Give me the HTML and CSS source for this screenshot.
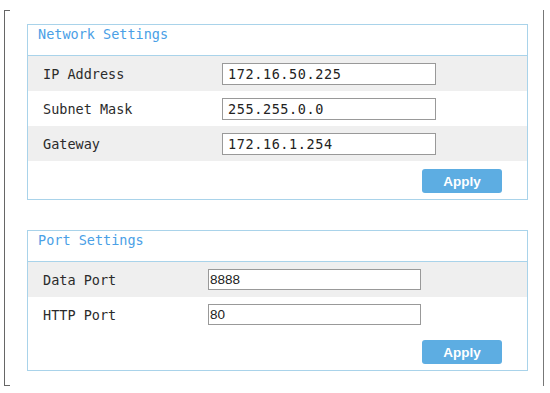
FILE: index.html
```html
<!DOCTYPE html>
<html lang="en">
<head>
  <meta charset="utf-8">
  <title>Settings</title>
  <link rel="stylesheet" href="styles.css">
</head>
<body>
  <div class="frame">

    <div class="panel net">
      <div class="panel-title">Network Settings</div>
      <div class="row shade">
        <span class="label">IP Address</span>
        <input class="field mono" type="text" value="172.16.50.225">
      </div>
      <div class="row">
        <span class="label">Subnet Mask</span>
        <input class="field mono" type="text" value="255.255.0.0">
      </div>
      <div class="row shade">
        <span class="label">Gateway</span>
        <input class="field mono" type="text" value="172.16.1.254">
      </div>
      <div class="panel-foot">
        <button class="apply">Apply</button>
      </div>
    </div>

    <div class="panel port">
      <div class="panel-title">Port Settings</div>
      <div class="row shade">
        <span class="label">Data Port</span>
        <input class="field" type="text" value="8888">
      </div>
      <div class="row">
        <span class="label">HTTP Port</span>
        <input class="field" type="text" value="80">
      </div>
      <div class="panel-foot">
        <button class="apply">Apply</button>
      </div>
    </div>

  </div>
</body>
</html>
```

FILE: styles.css
```css
html, body {
  margin: 0;
  background-color: #fff;
}

.frame {
  position: relative;
  box-sizing: border-box;
  width: 540px;
  height: 376px;
  margin: 10px 0 0 4px;
  padding: 14px 0 0 22px;
  border-left: 1px solid #666;
  border-right: 1px solid #777;
}
.frame::before,
.frame::after {
  content: "";
  position: absolute;
  left: 0;
  width: 5px;
  border-top: 1px solid #666;
}
.frame::before { top: 0; }
.frame::after { bottom: 0; }

.panel {
  width: 501px;
  box-sizing: border-box;
  border: 1px solid #a9d3ea;
  font-family: "DejaVu Sans Mono", monospace;
  font-size: 13.5px;
}
.panel.port {
  margin-top: 30px;
}

.panel-title {
  height: 31px;
  padding: 1px 0 0 10px;
  box-sizing: border-box;
  line-height: 17px;
  color: #4aa0e6;
  border-bottom: 1px solid #a9d3ea;
}

.row {
  display: grid;
  align-items: center;
  height: 35px;
  padding-left: 15px;
}
.net .row { grid-template-columns: 179px 214px; }
.port .row { grid-template-columns: 165px 213px; }
.row.shade {
  background-color: #efefef;
}

.label {
  color: #2b2b2b;
}

.field {
  box-sizing: border-box;
  height: 21px;
  margin: 0;
  padding: 0 1px;
  border: 1px solid #999;
  background: #fff;
  color: #222;
  font-family: "Liberation Sans", Arial, sans-serif;
  font-size: 13.5px;
}
.field.mono {
  height: 22px;
  padding: 0 5px;
  font-family: "DejaVu Sans Mono", monospace;
  font-size: 13.5px;
  letter-spacing: 0.6px;
}

.panel-foot {
  display: flex;
  justify-content: flex-end;
  height: 38px;
  padding: 8px 25px 0 0;
  box-sizing: border-box;
}

.apply {
  width: 80px;
  height: 24px;
  padding: 0;
  border: none;
  border-radius: 3px;
  background-color: #5dade2;
  color: #fff;
  font-family: "Liberation Sans", Arial, sans-serif;
  font-size: 13.5px;
  font-weight: bold;
  cursor: pointer;
}
```
